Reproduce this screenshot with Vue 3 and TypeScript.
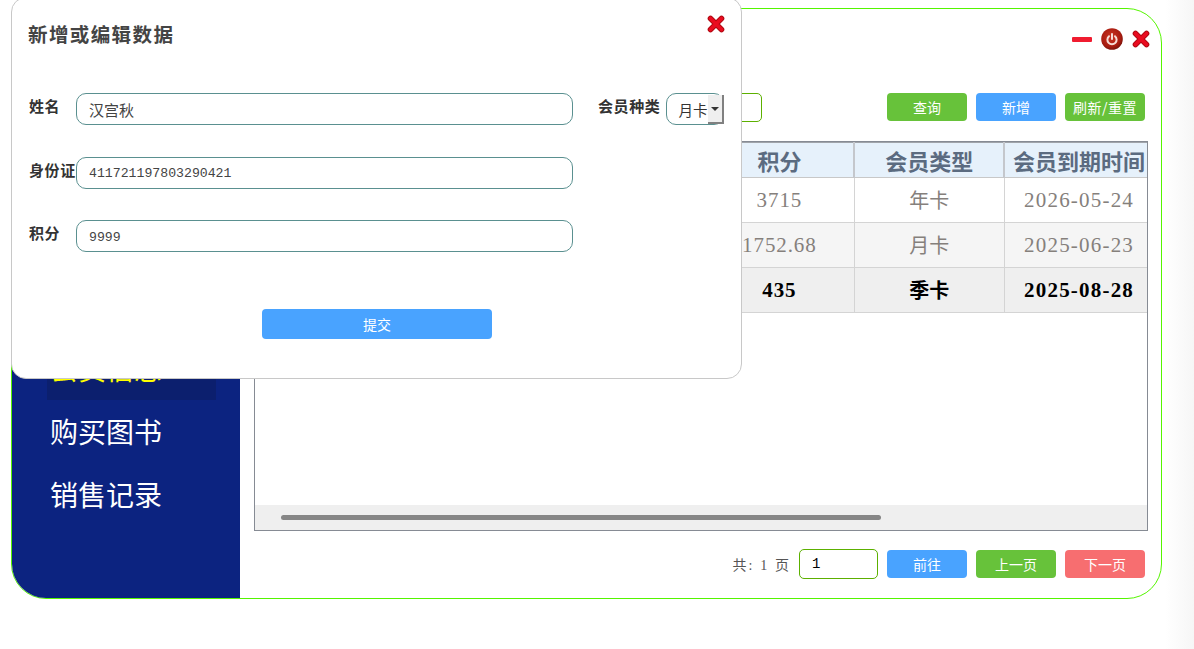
<script setup lang="ts">
interface Row { points: string; type: string; expire: string; hover?: boolean }
const rows: Row[] = [
  { points: '3715', type: '年卡', expire: '2026-05-24' },
  { points: '1752.68', type: '月卡', expire: '2025-06-23' },
  { points: '435', type: '季卡', expire: '2025-08-28', hover: true },
]
</script>

<template>
  <div class="page">
    <div class="frame">
      <aside class="side">
        <a class="nav active">会员信息</a>
        <a class="nav">购买图书</a>
        <a class="nav">销售记录</a>
      </aside>
      <main class="main">
        <div class="topbar">
          <span class="minus"></span>
          <svg class="power" viewBox="0 0 22 22" width="22" height="22">
            <defs>
              <radialGradient id="pw" cx="45%" cy="40%" r="65%">
                <stop offset="0" stop-color="#cc3422" />
                <stop offset="0.7" stop-color="#a81c10" />
                <stop offset="1" stop-color="#6e0f08" />
              </radialGradient>
            </defs>
            <circle cx="11" cy="11" r="10.8" fill="url(#pw)" />
            <path d="M8 8.2a4.6 4.6 0 1 0 6 0" fill="none" stroke="#f6dcd6" stroke-width="2" stroke-linecap="round" />
            <path d="M11 6v5" fill="none" stroke="#f6dcd6" stroke-width="2" stroke-linecap="round" />
          </svg>
          <svg class="cross" viewBox="0 0 18 18" width="18" height="18">
            <path d="M3.5 3.5l11 11M14.5 3.5l-11 11" fill="none" stroke="#b00810" stroke-width="5.6" stroke-linecap="round" />
            <path d="M3.5 3.5l11 11M14.5 3.5l-11 11" fill="none" stroke="#ea0c20" stroke-width="3.6" stroke-linecap="round" />
          </svg>
        </div>
        <div class="search">
          <input class="search-input" />
          <button class="btn green">查询</button>
          <button class="btn blue">新增</button>
          <button class="btn green loose">刷新/重置</button>
        </div>
        <div class="table-box">
          <div class="table-view">
            <table>
              <thead>
                <tr>
                  <th></th><th></th><th></th>
                  <th>积分</th><th>会员类型</th><th class="nowrap">会员到期时间</th>
                </tr>
              </thead>
              <tbody>
                <tr v-for="r in rows" :key="r.expire" :class="{ hover: r.hover }">
                  <td></td><td></td><td></td>
                  <td>{{ r.points }}</td><td class="kind">{{ r.type }}</td><td class="date">{{ r.expire }}</td>
                </tr>
              </tbody>
            </table>
          </div>
          <div class="track"><div class="thumb"></div></div>
        </div>
        <div class="pager">
          <span class="total">共: 1 页</span>
          <input class="page-input" value="1" />
          <button class="btn blue">前往</button>
          <button class="btn green">上一页</button>
          <button class="btn red">下一页</button>
        </div>
      </main>
    </div>

    <section class="dialog">
      <h2 class="title">新增或编辑数据</h2>
      <svg class="dlg-close" viewBox="0 0 18 18" width="18" height="18">
        <path d="M3.5 3.5l11 11M14.5 3.5l-11 11" fill="none" stroke="#b00810" stroke-width="5.6" stroke-linecap="round" />
        <path d="M3.5 3.5l11 11M14.5 3.5l-11 11" fill="none" stroke="#ea0c20" stroke-width="3.6" stroke-linecap="round" />
      </svg>
      <div class="form">
        <div class="row">
          <label class="lab">姓名</label>
          <input class="field name" value="汉宫秋" />
          <label class="lab lab2">会员种类</label>
          <div class="select-wrap">
            <select class="select"><option>月卡</option></select>
            <span class="arrow"></span>
          </div>
        </div>
        <div class="row">
          <label class="lab">身份证</label>
          <input class="field" value="411721197803290421" />
        </div>
        <div class="row">
          <label class="lab">积分</label>
          <input class="field" value="9999" />
        </div>
      </div>
      <div class="submit-row"><button class="submit">提交</button></div>
    </section>
  </div>
</template>

<style>
html, body {
  margin: 0;
  background: linear-gradient(to right, #fff 1165px, #f6f6f6 1194px);
}
</style>

<style scoped>
.page {
  position: relative;
  width: 1194px;
  height: 649px;
  overflow: hidden;
  padding: 8px 0 0 11px;
  box-sizing: border-box;
  font-family: "Liberation Serif", "Noto Sans CJK SC", serif;
}
.frame {
  display: flex;
  width: 1151px;
  height: 591px;
  box-sizing: border-box;
  border: 1px solid #55f500;
  border-radius: 35px;
  overflow: hidden;
  background: #fff;
}
.side {
  width: 228px;
  flex: none;
  box-sizing: border-box;
  padding: 331px 24px 0 35px;
  background: #0c2380;
}
.nav {
  display: block;
  height: 60px;
  margin-bottom: 3px;
  padding-left: 3px;
  font: 28px/56px "Noto Sans CJK SC", sans-serif;
  color: #fff;
}
.nav.active {
  color: #ffff00;
  background: #0c1f6e;
}
.main {
  flex: 1;
  min-width: 0;
  padding: 0 13px 0 14px;
  display: flex;
  flex-direction: column;
}
.topbar {
  height: 60px;
  margin-bottom: 24px;
  display: flex;
  justify-content: flex-end;
  align-items: center;
  gap: 9px;
}
.minus {
  width: 20px;
  height: 5px;
  background: #f01c30;
  border-radius: 1px;
}
.cross { margin-right: -2px; }
.search {
  display: flex;
  justify-content: flex-end;
  align-items: flex-start;
  gap: 9px;
  padding-right: 3px;
}
.search-input {
  width: 200px;
  height: 29px;
  box-sizing: border-box;
  margin-right: 116px;
  border: 1px solid #5cb000;
  border-radius: 5px;
  outline: none;
}
.btn {
  width: 80px;
  height: 28px;
  padding: 0;
  border: none;
  border-radius: 4px;
  color: #fff;
  font: 14px "Noto Sans CJK SC", sans-serif;
  white-space: nowrap;
}
.btn.loose { letter-spacing: 0.5px; }
.green { background: #67c23a; }
.blue { background: #49a3ff; }
.red { background: #f76e70; }
.table-box {
  margin-top: 19px;
  height: 390px;
  box-sizing: border-box;
  border: 1px solid #868b94;
  display: flex;
  flex-direction: column;
}
.table-view {
  flex: 1;
  min-height: 0;
  overflow: hidden;
}
table {
  width: 900px;
  table-layout: fixed;
  border-collapse: collapse;
}
th {
  height: 34px;
  padding: 0;
  background: #e6f1fb;
  color: #5b6b80;
  font: bold 22px/30px "Noto Sans CJK SC", sans-serif;
  border-right: 2px solid #c4c7cc;
  border-bottom: 1px solid #c8c8c8;
  border-top: 1px solid #a0a4aa;
  white-space: nowrap;
}
td {
  height: 44px;
  padding: 0;
  text-align: center;
  font: 21px "Liberation Serif", "Noto Sans CJK SC", serif;
  letter-spacing: 0.9px;
  color: #85807c;
  border-right: 1px solid #d4d4d4;
  border-bottom: 1px solid #d4d4d4;
  white-space: nowrap;
}
td.kind {
  font-family: "Noto Sans CJK SC", sans-serif;
  font-size: 20px;
  line-height: 24px;
  letter-spacing: 0;
}
td.date { letter-spacing: 1.2px; }
tbody tr:nth-child(2) td { background: #f5f5f5; }
tr.hover td {
  background: #efefef;
  color: #000;
  font-weight: bold;
}
.track {
  height: 25px;
  flex: none;
  background: #efefef;
  padding: 10px 0 0 26px;
  box-sizing: border-box;
}
.thumb {
  width: 600px;
  height: 5px;
  border-radius: 3px;
  background: #868686;
}
.pager {
  margin-top: 18px;
  display: flex;
  justify-content: flex-end;
  align-items: center;
  gap: 9px;
  padding-right: 3px;
}
.total {
  font: 14px "Liberation Serif", "Noto Sans CJK SC", serif;
  letter-spacing: 2.1px;
  margin-right: -1px;
  color: #555;
}
.page-input {
  width: 79px;
  height: 30px;
  box-sizing: border-box;
  padding: 0 12px;
  border: 1px solid #5cb000;
  border-radius: 5px;
  outline: none;
  font: 14px "Liberation Mono", monospace;
  color: #000;
}
.dialog {
  position: absolute;
  left: 11px;
  top: -3px;
  width: 731px;
  height: 382px;
  box-sizing: border-box;
  border: 1px solid #c8c8c8;
  border-radius: 15px;
  background: #fff;
}
.title {
  margin: 23px 0 0 16px;
  font: bold 19.5px/26px "Noto Sans CJK SC", sans-serif;
  letter-spacing: 1.4px;
  color: #444;
}
.dlg-close {
  position: absolute;
  left: 695px;
  top: 17px;
}
.form {
  margin: 46px 0 0 17px;
  display: flex;
  flex-direction: column;
  gap: 31.5px;
}
.row {
  display: flex;
  align-items: flex-start;
  height: 32px;
}
.lab {
  width: 47px;
  flex: none;
  font: bold 15px/26px "Noto Sans CJK SC", sans-serif;
  letter-spacing: 0.6px;
  color: #333;
  white-space: nowrap;
}
.lab2 {
  width: auto;
  margin: 0 6px 0 25px;
}
.field {
  width: 497px;
  height: 32px;
  box-sizing: border-box;
  padding: 2px 12px 0;
  border: 1px solid #5a9090;
  border-radius: 10px;
  outline: none;
  font: 13.2px "Liberation Mono", "Noto Sans CJK SC", monospace;
  color: #444;
}
.field.name {
  padding-top: 0;
  font: 15px "Noto Sans CJK SC", sans-serif;
}
.select-wrap {
  position: relative;
  width: 58px;
  height: 32px;
}
.select {
  appearance: none;
  width: 100%;
  height: 100%;
  box-sizing: border-box;
  padding: 0 0 0 11px;
  border: 1px solid #5a9090;
  border-radius: 10px;
  outline: none;
  background: #fff;
  font: 14.5px "Noto Sans CJK SC", sans-serif;
  color: #333;
}
.arrow {
  position: absolute;
  right: 0;
  top: 2px;
  width: 16px;
  height: 29px;
  box-sizing: border-box;
  background: #efefef;
  border-right: 2px solid #808080;
  border-bottom: 2px solid #808080;
}
.arrow::after {
  content: "";
  position: absolute;
  left: 3px;
  top: 12px;
  border: 4px solid transparent;
  border-top: 4px solid #333;
  border-bottom: 0;
}
.submit-row {
  margin-top: 57px;
  padding-left: 250px;
}
.submit {
  width: 230px;
  height: 30px;
  padding: 0;
  border: none;
  border-radius: 4px;
  background: #49a3ff;
  color: #fff;
  font: 14px "Noto Sans CJK SC", sans-serif;
}
</style>
